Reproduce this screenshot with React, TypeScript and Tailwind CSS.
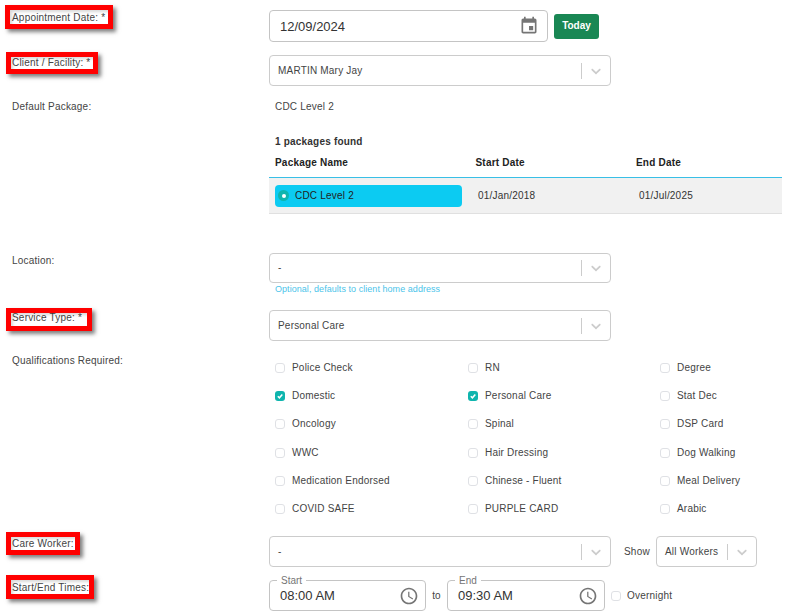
import type { ReactNode } from "react";

const QUALS: [string, boolean][][] = [
  [["Police Check", false], ["RN", false], ["Degree", false]],
  [["Domestic", true], ["Personal Care", true], ["Stat Dec", false]],
  [["Oncology", false], ["Spinal", false], ["DSP Card", false]],
  [["WWC", false], ["Hair Dressing", false], ["Dog Walking", false]],
  [["Medication Endorsed", false], ["Chinese - Fluent", false], ["Meal Delivery", false]],
  [["COVID SAFE", false], ["PURPLE CARD", false], ["Arabic", false]],
];

function Chevron() {
  return (
    <svg viewBox="0 0 20 20" className="h-4 w-4 fill-[#cccccc]">
      <path d="M4.516 7.548c0.436-0.446 1.043-0.481 1.576 0l3.908 3.747 3.908-3.747c0.533-0.481 1.141-0.446 1.576 0 0.436 0.445 0.408 1.197 0 1.615-0.406 0.418-4.695 4.502-4.695 4.502-0.217 0.223-0.502 0.335-0.789 0.335s-0.572-0.112-0.79-0.335c0 0-4.287-4.084-4.695-4.502s-0.436-1.17 0-1.615z" />
    </svg>
  );
}

function ClockIcon() {
  return (
    <svg viewBox="0 0 24 24" className="h-5 w-5 fill-[#757575]">
      <path d="M11.99 2C6.47 2 2 6.48 2 12s4.47 10 9.99 10C17.52 22 22 17.52 22 12S17.52 2 11.99 2zM12 20c-4.42 0-8-3.58-8-8s3.58-8 8-8 8 3.58 8 8-3.58 8-8 8zm.5-13H11v6l5.25 3.15.75-1.23-4.5-2.67z" />
    </svg>
  );
}

function Select({ value, className }: { value: string; className: string }) {
  return (
    <div className={`flex shrink-0 items-center rounded-[4px] border border-[#cccccc] bg-white ${className}`}>
      <span className="min-w-0 flex-1 truncate pl-2 text-[#444444]">{value}</span>
      <span className="h-4 w-px bg-[#cccccc]" />
      <span className="flex w-[28px] justify-center">
        <Chevron />
      </span>
    </div>
  );
}

function Check({ on }: { on: boolean }) {
  if (on) {
    return (
      <span className="flex h-[10px] w-[10px] shrink-0 items-center justify-center rounded-[3px] bg-[#0fb5ae]">
        <svg viewBox="0 0 10 10" className="h-[10px] w-[10px] fill-none stroke-white stroke-[1.5]">
          <path d="M2.8 5.2 4.4 6.8 7.3 3.4" />
        </svg>
      </span>
    );
  }
  return <span className="block h-[10px] w-[10px] shrink-0 rounded-[3px] border-[1.5px] border-[#dfe1e5] bg-white" />;
}

// red annotation frame drawn over a label
function Mark({ className }: { className: string }) {
  return (
    <span
      className={`pointer-events-none absolute border-[5px] border-[#ff0000] shadow-[3px_3px_4px_rgba(0,0,0,0.5),inset_2px_2px_3px_rgba(0,0,0,0.15)] ${className}`}
    />
  );
}

function Row({ label, mark, labelClass = "pt-px", className = "", children }: {
  label: string;
  mark?: string;
  labelClass?: string;
  className?: string;
  children: ReactNode;
}) {
  return (
    <div className={`flex ${className}`}>
      <div className={`w-[269px] shrink-0 pl-3 ${labelClass}`}>
        <span className="relative inline-block h-[14px] text-[#444444]">
          {label}
          {mark && <Mark className={mark} />}
        </span>
      </div>
      <div className="min-w-0 flex-1">{children}</div>
    </div>
  );
}

function TimeField({ label, value, className }: { label: string; value: string; className: string }) {
  return (
    <div className={`relative flex h-[31px] items-center rounded-[4px] border border-[#c4c4c4] bg-white pl-[10px] pr-[6px] ${className}`}>
      <span className="absolute -top-[6px] left-[7px] bg-white px-[4px] text-[10px] leading-[11px] tracking-normal text-[#757575]">
        {label}
      </span>
      <span className="flex-1 text-[13px] tracking-normal text-[#333333]">{value}</span>
      <ClockIcon />
    </div>
  );
}

export default function App() {
  return (
    <div className="h-[615px] w-[796px] overflow-hidden bg-white font-['Liberation_Sans',Arial,sans-serif] text-[10px] leading-[14px] tracking-[0.2px]">
      <Row label="Appointment Date: *" mark="-left-[7px] -top-[6px] h-[24px] w-[108px]" className="pt-[10px]">
        <div className="flex items-center gap-[6px]">
          <div className="flex h-[32px] w-[279px] items-center rounded-[4px] border border-[#c4c4c4] pl-[10px] pr-[8px]">
            <span className="flex-1 pt-[2px] text-[13px] tracking-normal text-[#333333]">12/09/2024</span>
            <svg viewBox="0 0 24 24" className="h-5 w-5 fill-[#757575]">
              <path d="M17 12h-5v5h5v-5zM16 1v2H8V1H6v2H5c-1.11 0-1.99.9-1.99 2L3 19c0 1.1.89 2 2 2h14c1.1 0 2-.9 2-2V5c0-1.1-.9-2-2-2h-1V1h-2zm3 18H5V8h14v11z" />
            </svg>
          </div>
          <button className="h-[25px] w-[45px] rounded-[3px] bg-[#198754] text-[10px] font-bold tracking-normal text-white">
            Today
          </button>
        </div>
      </Row>

      <Row label="Client / Facility: *" mark="-left-[6px] -top-[4px] h-[22px] w-[92px]" className="mt-[13px]">
        <Select value="MARTIN Mary Jay" className="h-[31px] w-[342px]" />
      </Row>

      <Row label="Default Package:" className="mt-[13px]">
        <div className="pl-[6px] pt-px text-[#444444]">CDC Level 2</div>
        <div className="mt-[21px] pl-[6px] font-bold text-[#333333]">1 packages found</div>
        <div className="mt-[7px] flex h-[21px] pl-[6px] font-bold text-[#222222]">
          <span className="w-[200.5px]">Package Name</span>
          <span className="w-[160.5px]">Start Date</span>
          <span>End Date</span>
        </div>
        <div className="flex h-[37px] w-[513px] items-center border-y border-t-[#39bfe6] border-b-[#e0e0e0] bg-[#f1f1f1] pl-[6px] text-[#333333]">
          <div className="flex h-[22px] w-[187px] items-center gap-[6px] rounded-[4px] bg-[#0ccbf2] pl-[3px] text-[#222222]">
            <span className="flex h-[11px] w-[11px] items-center justify-center rounded-full bg-[#0fb5ae]">
              <span className="h-[4px] w-[4px] rounded-full bg-white" />
            </span>
            <span className="pt-px">CDC Level 2</span>
          </div>
          <span className="w-[161px] pl-[16px] pt-px">01/Jan/2018</span>
          <span className="pl-[16px] pt-px">01/Jul/2025</span>
        </div>
      </Row>

      <Row label="Location:" className="mt-[39px]">
        <Select value="-" className="h-[30px] w-[342px]" />
        <div className="h-[12px] pl-[6px] text-[9px] leading-[12px] tracking-[0.05px] text-[#4cc4ea]">
          Optional, defaults to client home address
        </div>
      </Row>

      <Row label="Service Type: *" mark="-left-[6px] -top-[3px] h-[23px] w-[86px]" className="mt-[15px]">
        <Select value="Personal Care" className="h-[31px] w-[342px]" />
      </Row>

      <Row label="Qualifications Required:" className="mt-[12px]">
        <div className="grid grid-cols-[193px_192px_1fr] pl-[6px] pt-px text-[#444444]">
          {QUALS.flat().map(([name, on]) => (
            <label key={name} className="flex h-[28.2px] items-center gap-[7px]">
              <Check on={on} />
              {name}
            </label>
          ))}
        </div>
      </Row>

      <Row label="Care Worker:" mark="-left-[6px] -top-[5px] h-[23px] w-[74px]" className="mt-[13px]">
        <div className="flex items-center">
          <Select value="-" className="h-[31px] w-[342px]" />
          <span className="ml-[13px] w-[32px] text-[#444444]">Show</span>
          <Select value="All Workers" className="h-[31px] w-[101px]" />
        </div>
      </Row>

      <Row label="Start/End Times:" mark="-left-[6px] -top-[6px] h-[24px] w-[88px]" className="mt-[13px]">
        <div className="flex items-center">
          <TimeField label="Start" value="08:00 AM" className="w-[157px]" />
          <span className="w-[21px] text-center text-[#444444]">to</span>
          <TimeField label="End" value="09:30 AM" className="w-[158px]" />
          <span className="mx-[6px] block">
            <Check on={false} />
          </span>
          <span className="text-[#444444]">Overnight</span>
        </div>
      </Row>
    </div>
  );
}
